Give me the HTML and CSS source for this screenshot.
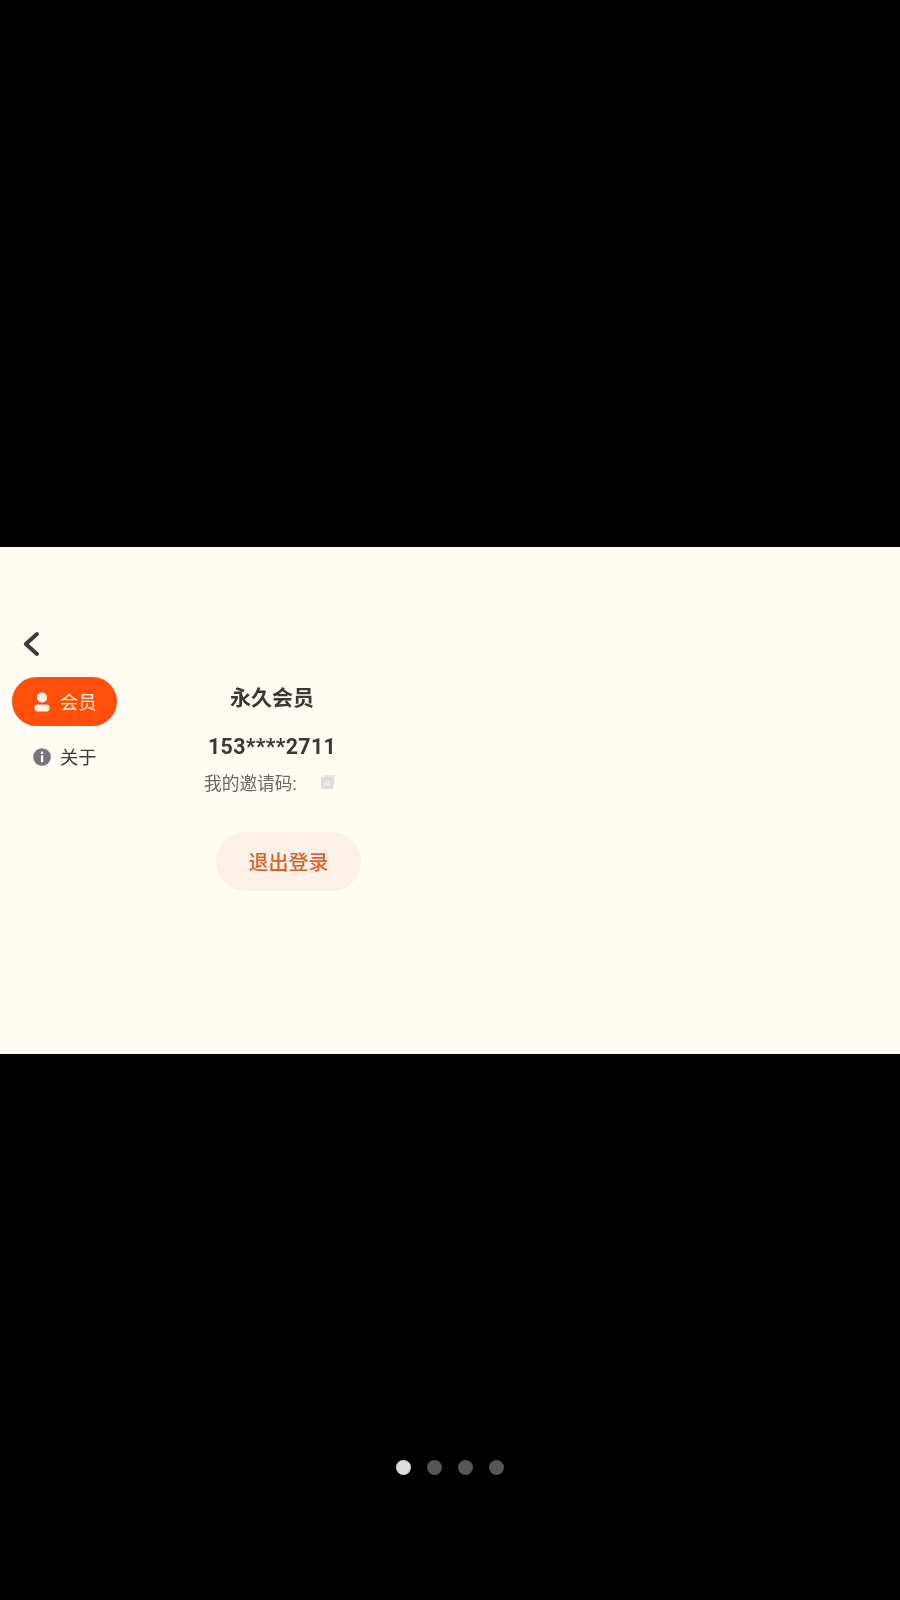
FILE: index.html
```html
<!DOCTYPE html>
<html lang="zh-CN">
<head>
<meta charset="utf-8">
<title>会员</title>
<link rel="stylesheet" href="styles.css">
</head>
<body>
<main class="screen">
  <section class="panel">
    <button class="back" aria-label="返回">
      <svg viewBox="0 0 18 26" width="18" height="26"><path d="M15 3 3.8 13 15 23" fill="none" stroke="#3a3a3a" stroke-width="3.9" stroke-linecap="round" stroke-linejoin="round"/></svg>
    </button>
    <div class="columns">
      <nav class="side">
        <a class="tab tab-active">
          <svg viewBox="0 0 18 20" width="18" height="20"><circle cx="9" cy="5.4" r="5" fill="#fff3e6"/><rect x="1.4" y="12.6" width="15.2" height="6.8" rx="3.4" fill="#fff3e6"/></svg>
          <span>会员</span>
        </a>
        <a class="tab">
          <svg viewBox="0 0 18 18" width="18" height="18"><circle cx="9" cy="9" r="8.8" fill="#77757a"/><rect x="8" y="3.6" width="2.2" height="2.4" fill="#fff"/><rect x="8" y="7.2" width="2.2" height="7" fill="#fff"/></svg>
          <span>关于</span>
        </a>
      </nav>
      <div class="account">
        <h1 class="level">永久会员</h1>
        <p class="phone">153****2711</p>
        <div class="invite">
          <span>我的邀请码:</span>
          <svg viewBox="0 0 14 14" width="14" height="14"><rect x="3.5" y="0" width="10.5" height="10.5" fill="#e8e7e7"/><rect x="0" y="2" width="12" height="12" fill="#dddcdc"/><rect x="3" y="5" width="6" height="6" fill="#e9e8e8"/></svg>
        </div>
        <button class="logout">退出登录</button>
      </div>
    </div>
  </section>
  <div class="dots">
    <i class="dot dot-on"></i><i class="dot"></i><i class="dot"></i><i class="dot"></i>
  </div>
</main>
</body>
</html>
```

FILE: styles.css
```css
* { box-sizing: border-box; }
html, body { margin: 0; height: 100%; background: #000; }
body { font-family: Roboto, "Noto Sans CJK SC", sans-serif; }
.screen { height: 1600px; padding-top: 547px; overflow: hidden; }
.panel { height: 507px; background: #fffdf3; padding: 84px 0 0 22px; filter: blur(0.45px); }
.back { display: block; width: 18px; height: 26px; margin: 0; padding: 0; border: 0; background: none; }
.back svg { display: block; }
.columns { display: flex; margin: 20px 0 0 -10px; }
.side { width: 105px; display: flex; flex-direction: column; gap: 6px; }
.tab { height: 49px; display: flex; align-items: center; gap: 9px; padding-left: 21px; padding-bottom: 1px; font-size: 18.3px; color: #3d3a38; border-radius: 25px; }
.tab svg { flex: none; margin-top: 2px; }
.tab-active { background: #ff4f0a; color: #ffeedd; }
.account { width: 243px; display: flex; flex-direction: column; }
.level { margin: 0 0 0 113px; width: 84px; height: 43px; font-size: 21px; line-height: 43px; font-weight: 700; color: #3a3735; white-space: nowrap; }
.phone { margin: 12px 0 0 91px; font-size: 21.4px; line-height: 30px; font-weight: 700; color: #3a3735; letter-spacing: 0.3px; white-space: nowrap; }
.invite { margin: 8px 0 0 87px; height: 24px; display: flex; align-items: center; gap: 24px; font-size: 17.7px; color: #6b6866; white-space: nowrap; }
.logout { margin: 38px 0 0 99px; width: 145px; height: 59px; border: 0; border-radius: 30px; background: #fdf0e6; color: #d9622b; font: 500 20px Roboto, "Noto Sans CJK SC", sans-serif; }
.dots { margin-top: 406px; padding-left: 396px; display: flex; gap: 16px; }
.dot { width: 15px; height: 15px; border-radius: 50%; background: #565656; }
.dot-on { background: #dcdcdc; }
```
